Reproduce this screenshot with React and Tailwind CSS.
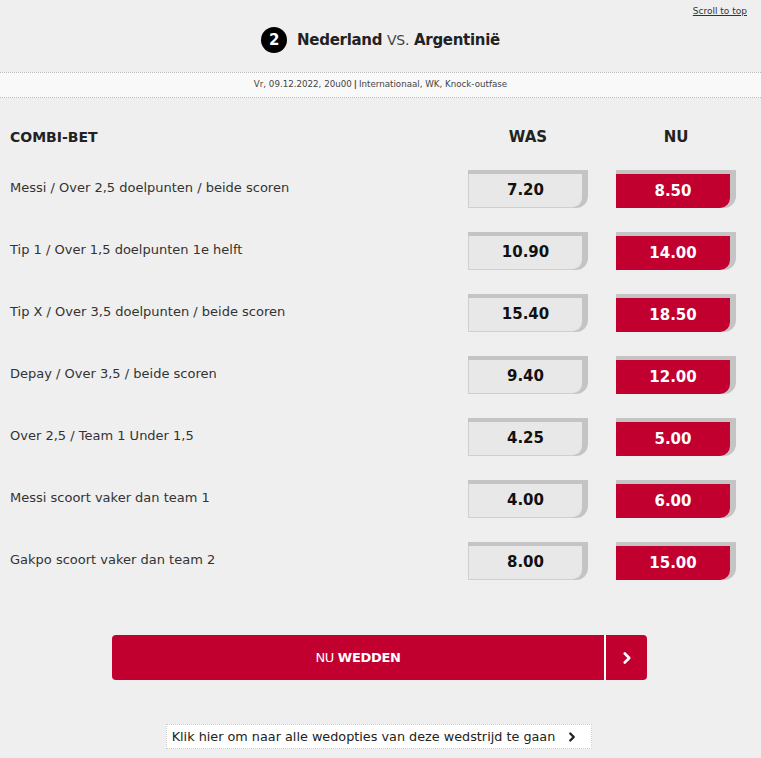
import { ChevronRight } from 'lucide-react'

const bets = [
  { label: 'Messi / Over 2,5 doelpunten / beide scoren', was: '7.20', nu: '8.50' },
  { label: 'Tip 1 / Over 1,5 doelpunten 1e helft', was: '10.90', nu: '14.00' },
  { label: 'Tip X / Over 3,5 doelpunten / beide scoren', was: '15.40', nu: '18.50' },
  { label: 'Depay / Over 3,5 / beide scoren', was: '9.40', nu: '12.00' },
  { label: 'Over 2,5 / Team 1 Under 1,5', was: '4.25', nu: '5.00' },
  { label: 'Messi scoort vaker dan team 1', was: '4.00', nu: '6.00' },
  { label: 'Gakpo scoort vaker dan team 2', was: '8.00', nu: '15.00' },
]

function OddBox({ value, active }) {
  return (
    <div className="w-[120px] h-[38px] bg-[#c4c4c4] rounded-br-[12px] pt-[4px] pr-[6px]">
      <div
        className={
          active
            ? 'h-full rounded-br-[10px] bg-[#c1002f] text-white flex items-center justify-center text-[15px] font-bold'
            : 'h-full rounded-br-[10px] bg-[#e8e8e8] border-l border-b border-[#cfcfcf] text-[#111] flex items-center justify-center text-[15px] font-bold'
        }
      >
        {value}
      </div>
    </div>
  )
}

export default function App() {
  return (
    <div className="min-h-[758px] bg-[#efefef] text-[#222] font-['DejaVu_Sans',sans-serif]">
      {/* Header */}
      <div className="relative h-[72px] flex items-center justify-center pt-[8px]">
        <a className="absolute right-[14px] top-[5px] text-[9px] text-[#333] underline">Scroll to top</a>
        <div className="flex items-center gap-[10px]">
          <span className="w-[26px] h-[26px] rounded-full bg-black text-white flex items-center justify-center text-[15px] font-bold">2</span>
          <span className="text-[15px] font-bold text-[#222] tracking-[-0.3px]">
            Nederland <span className="font-normal text-[14px] text-[#444]">VS.</span> Argentinië
          </span>
        </div>
      </div>
      <div className="h-[26px] bg-[#f9f9f9] border-y border-dotted border-[#bbb] flex items-center justify-center text-[8.7px] text-[#444]">
        Vr, 09.12.2022, 20u00 <span className="font-bold mx-[2px]">|</span> Internationaal, WK, Knock-outfase
      </div>

      {/* Table */}
      <div className="pl-[10px] pr-[25px] pt-[28px]">
        <div className="flex items-center h-[22px]">
          <div className="flex-1 text-[14px] font-bold text-[#222]">COMBI-BET</div>
          <div className="w-[120px] text-center text-[15px] font-bold">WAS</div>
          <div className="w-[28px]" />
          <div className="w-[120px] text-center text-[15px] font-bold">NU</div>
        </div>
        <div className="flex flex-col gap-[24px] mt-[22px]">
          {bets.map((b) => (
            <div key={b.label} className="flex items-center h-[38px]">
              <div className="flex-1 text-[13px] text-[#333] -mt-[2px]">{b.label}</div>
              <OddBox value={b.was} />
              <div className="w-[28px]" />
              <OddBox value={b.nu} active />
            </div>
          ))}
        </div>
      </div>

      {/* Bet button */}
      <div className="flex justify-center mt-[55px] pr-[2px]">
        <div className="w-[535px] h-[45px] flex rounded-[4px] overflow-hidden bg-[#c1002f]">
          <div className="flex-1 flex items-center justify-center text-white text-[13px] tracking-[-0.3px]">
            NU&nbsp;<span className="font-bold">WEDDEN</span>
          </div>
          <div className="w-[2px] bg-white" />
          <div className="w-[41px] flex items-center justify-center text-white">
            <ChevronRight size={18} strokeWidth={3.5} />
          </div>
        </div>
      </div>

      {/* Link */}
      <div className="flex justify-center mt-[44px] pr-[3px]">
        <div className="h-[25px] bg-white border border-dotted border-[#ccc] flex items-center pl-[5px] pr-[12px] gap-[10px] text-[12.8px] text-[#222]">
          Klik hier om naar alle wedopties van deze wedstrijd te gaan
          <ChevronRight size={14} strokeWidth={4} />
        </div>
      </div>
    </div>
  )
}
